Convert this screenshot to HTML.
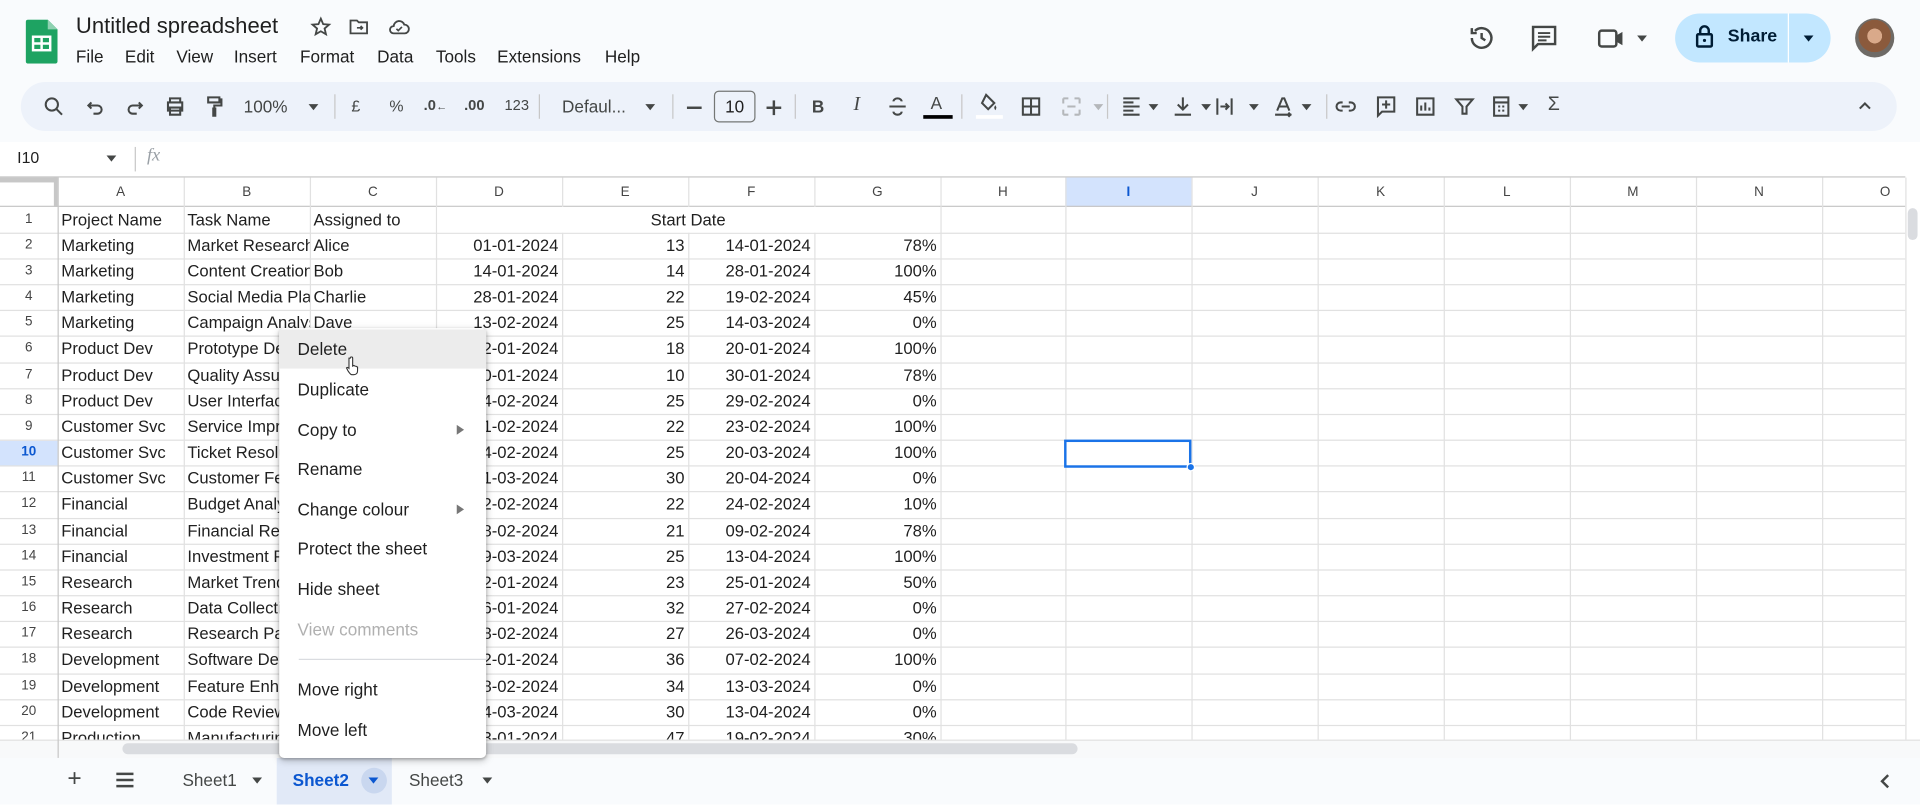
<!DOCTYPE html>
<html><head><meta charset="utf-8"><style>
*{box-sizing:border-box;margin:0;padding:0}
html,body{width:1920px;height:804px;overflow:hidden;background:#fff;font-family:"Liberation Sans",Arial,sans-serif;color:#1f1f1f}
#w{position:absolute;left:0;top:0;width:1568px;height:657px;transform:scale(1.22449);transform-origin:0 0;background:#fff}
.a{position:absolute}
.hdr{left:0;top:0;width:1568px;height:116px;background:#f9fbfd}
.tb{left:17px;top:67px;width:1532px;height:40px;border-radius:20px;background:#edf2fa}
.ic{position:absolute;top:77px;width:20px;height:20px}
.t{position:absolute;font-size:14px;color:#444746;top:79px}
.sep{position:absolute;top:77px;width:1px;height:20px;background:#c7c7c7}
.menu span{position:absolute;top:38px;font-size:14px;color:#1f1f1f}
.vl{position:absolute;top:145px;width:1px;height:460px;background:#e1e1e1}
.hl{position:absolute;left:0;width:1556px;height:1px;background:#e1e1e1}
.ch{position:absolute;top:145px;height:24px;font-size:11px;color:#444;text-align:center;line-height:24px}
.r{position:absolute;left:0;width:768px;height:21px;font-size:13.6px;line-height:21px}
.r div{position:absolute;top:0;height:21px;overflow:hidden;white-space:nowrap}
.n{left:0;width:47px;text-align:center;font-size:11px!important;color:#444}
.c1{left:50px;width:100px}.c2{left:153px;width:100px}.c3{left:256px;width:100px}
.c4{left:356px;width:100px;text-align:right}.c5{left:459px;width:100px;text-align:right}.c6{left:562px;width:100px;text-align:right}.c7{left:665px;width:100px;text-align:right}
.cm{position:absolute;left:228px;top:268px;width:169px;height:351px;background:#fff;border-radius:4px;box-shadow:0 2px 6px rgba(0,0,0,.25),0 1px 2px rgba(0,0,0,.2)}
.cm div{position:absolute;left:15px;font-size:14px;color:#1f1f1f}
.ar{position:absolute;left:145px;width:0;height:0;border-left:6px solid #777;border-top:4px solid transparent;border-bottom:4px solid transparent}
</style></head><body><div id="w">
<div class="a hdr"></div>
<svg class="a" style="left:21px;top:16px" width="26" height="36" viewBox="0 0 26 36"><path d="M2 0h16l8 8v26a2 2 0 0 1-2 2H2a2 2 0 0 1-2-2V2a2 2 0 0 1 2-2z" fill="#1ea362"/><path d="M18 0l8 8h-8z" fill="#8ed1b1"/><rect x="6" y="14" width="14" height="11" fill="none" stroke="#fff" stroke-width="2"/><path d="M6 19.5h14M13 14v11" stroke="#fff" stroke-width="2"/></svg>
<div class="a" style="left:62px;top:11px;font-size:18px;color:#1f1f1f">Untitled spreadsheet</div>
<svg class="a" style="left:253px;top:13px" width="18" height="18" viewBox="0 0 24 24"><path d="M12 3l2.6 6 6.4.5-4.9 4.2 1.5 6.3L12 16.7 6.4 20l1.5-6.3L3 9.5l6.4-.5z" fill="none" stroke="#444746" stroke-width="2"/></svg>
<svg class="a" style="left:284px;top:13px" width="18" height="18" viewBox="0 0 24 24"><path d="M3 5h7l2 2h9v12H3z" fill="none" stroke="#444746" stroke-width="2"/><path d="M10 13h6m-2-2l2 2-2 2" stroke="#444746" stroke-width="1.8" fill="none"/></svg>
<svg class="a" style="left:316px;top:13px" width="20" height="18" viewBox="0 0 24 24"><path d="M6 19a4 4 0 0 1 0-8 6 6 0 0 1 11.6-1.5A4.5 4.5 0 0 1 18 19z" fill="none" stroke="#444746" stroke-width="2"/><path d="M9 14l2 2 4-4" stroke="#444746" stroke-width="1.8" fill="none"/></svg>
<div class="a menu" style="left:0;top:0"><span style="left:62px">File</span><span style="left:102px">Edit</span><span style="left:144px">View</span><span style="left:191px">Insert</span><span style="left:245px">Format</span><span style="left:308px">Data</span><span style="left:356px">Tools</span><span style="left:406px">Extensions</span><span style="left:494px">Help</span></div>
<svg class="a" style="left:1198px;top:19px" width="24" height="24" viewBox="0 0 24 24"><path d="M4 12a8 8 0 1 0 2.5-5.8M4 4v4h4" fill="none" stroke="#444746" stroke-width="2"/><path d="M12 8v4l3 2" stroke="#444746" stroke-width="2" fill="none"/></svg>
<svg class="a" style="left:1249px;top:19px" width="24" height="24" viewBox="0 0 24 24"><path d="M3 3h18v14H7l-4 4z" fill="none" stroke="#444746" stroke-width="2"/><path d="M7 8h10M7 11h10M7 14h7" stroke="#444746" stroke-width="1.6"/></svg>
<svg class="a" style="left:1303px;top:19px" width="26" height="24" viewBox="0 0 26 24"><rect x="3" y="6" width="14" height="13" rx="2" fill="none" stroke="#444746" stroke-width="2"/><path d="M17 10l5-3v11l-5-3z" fill="#444746"/></svg>
<div class="a" style="left:1337px;top:29px;border-left:4px solid transparent;border-right:4px solid transparent;border-top:5px solid #444746"></div>
<div class="a" style="left:1368px;top:11px;width:127px;height:40px;border-radius:20px;background:#c2e7ff"></div>
<div class="a" style="left:1460px;top:11px;width:1px;height:40px;background:#fff"></div>
<svg class="a" style="left:1384px;top:20px" width="16" height="20" viewBox="0 0 16 20"><rect x="2" y="8" width="12" height="10" rx="1" fill="none" stroke="#001d35" stroke-width="2"/><path d="M4.5 8V5a3.5 3.5 0 0 1 7 0v3" fill="none" stroke="#001d35" stroke-width="2"/><circle cx="8" cy="13" r="1.3" fill="#001d35"/></svg>
<div class="a" style="left:1411px;top:22px;font-size:14.5px;color:#001d35;font-weight:bold">Share</div>
<div class="a" style="left:1473px;top:29px;border-left:4px solid transparent;border-right:4px solid transparent;border-top:5px solid #001d35"></div>
<div class="a" style="left:1515px;top:15px;width:32px;height:32px;border-radius:50%;background:radial-gradient(circle at 50% 45%,#d9a98a 0 25%,#8b5a3c 26% 55%,#6e6a66 56%)"></div>
<div class="a tb"></div>
<svg class="ic" style="left:34px" viewBox="0 0 24 24"><circle cx="10" cy="10" r="6" fill="none" stroke="#444746" stroke-width="2"/><path d="M14.5 14.5L20 20" stroke="#444746" stroke-width="2"/></svg>
<svg class="ic" style="left:68px" viewBox="0 0 24 24"><path d="M8 8l-3 3 3 3M5 11h9a4 4 0 0 1 0 8h-4" fill="none" stroke="#444746" stroke-width="2"/></svg>
<svg class="ic" style="left:100px" viewBox="0 0 24 24"><path d="M16 8l3 3-3 3M19 11h-9a4 4 0 0 0 0 8h4" fill="none" stroke="#444746" stroke-width="2"/></svg>
<svg class="ic" style="left:133px" viewBox="0 0 24 24"><path d="M7 8V4h10v4M5 8h14v8H5zM7 13h10v7H7z" fill="none" stroke="#444746" stroke-width="2"/></svg>
<svg class="ic" style="left:165px" viewBox="0 0 24 24"><path d="M6 3h11v5H6zM17 5h2v6h-7v3M11 14h2v7h-2z" fill="none" stroke="#444746" stroke-width="2"/></svg>
<div class="t" style="left:199px">100%</div>
<div class="a" style="left:252px;top:85px;border-left:4px solid transparent;border-right:4px solid transparent;border-top:5px solid #444746"></div>
<div class="sep" style="left:273px"></div>
<div class="t" style="left:287px;font-size:13px">£</div>
<div class="t" style="left:318px;font-size:13px">%</div>
<div class="t" style="left:346px;font-size:12px;font-weight:bold">.0<span style="font-size:9px">←</span></div>
<div class="t" style="left:379px;font-size:12px;font-weight:bold">.00</div>
<div class="t" style="left:412px;font-size:12px">123</div>
<div class="sep" style="left:440px"></div>
<div class="t" style="left:459px">Defaul...</div>
<div class="a" style="left:527px;top:85px;border-left:4px solid transparent;border-right:4px solid transparent;border-top:5px solid #444746"></div>
<div class="sep" style="left:549px"></div>
<div class="a" style="left:561px;top:87px;width:12px;height:2px;background:#444746"></div>
<div class="a" style="left:583px;top:74px;width:34px;height:26px;border:1px solid #747775;border-radius:4px;font-size:14px;text-align:center;line-height:24px">10</div>
<div class="a" style="left:626px;top:87px;width:12px;height:2px;background:#444746"></div>
<div class="a" style="left:631px;top:82px;width:2px;height:12px;background:#444746"></div>
<div class="sep" style="left:649px"></div>
<div class="t" style="left:663px;font-weight:bold;color:#444746">B</div>
<div class="t" style="left:697px;font-style:italic;font-family:'Liberation Serif',serif;font-size:16px;top:77px">I</div>
<svg class="ic" style="left:723px" viewBox="0 0 24 24"><path d="M4 12h16M16 7a4 3 0 0 0-8 0M8 17a4 3 0 0 0 8 0" fill="none" stroke="#444746" stroke-width="2"/></svg>
<div class="t" style="left:760px;top:76px">A</div>
<div class="a" style="left:754px;top:94px;width:24px;height:3px;background:#000"></div>
<div class="sep" style="left:785px"></div>
<svg class="ic" style="left:797px;top:75px" viewBox="0 0 24 24"><path d="M10 3l8 8-6 6-6-6z" fill="none" stroke="#444746" stroke-width="2"/><path d="M20 15c0 2-1 3-1 3s-1-1-1-3l1-2z" fill="#444746"/></svg>
<div class="a" style="left:797px;top:94px;width:22px;height:3px;background:#fff"></div>
<svg class="ic" style="left:832px" viewBox="0 0 24 24"><path d="M4 4h16v16H4zM12 4v16M4 12h16" fill="none" stroke="#444746" stroke-width="2"/></svg>
<svg class="ic" style="left:865px" viewBox="0 0 24 24"><path d="M4 4h5M4 20h5M15 4h5M15 20h5M4 4v5M4 15v5M20 4v5M20 15v5M8 12h8" fill="none" stroke="#b4b7ba" stroke-width="2"/></svg>
<div class="a" style="left:893px;top:85px;border-left:4px solid transparent;border-right:4px solid transparent;border-top:5px solid #b4b7ba"></div>
<div class="sep" style="left:904px"></div>
<svg class="ic" style="left:914px" viewBox="0 0 24 24"><path d="M4 4h16M4 8h10M4 12h16M4 16h10M4 20h16" stroke="#444746" stroke-width="2"/></svg>
<div class="a" style="left:938px;top:85px;border-left:4px solid transparent;border-right:4px solid transparent;border-top:5px solid #444746"></div>
<svg class="ic" style="left:956px" viewBox="0 0 24 24"><path d="M12 3v12M7 10l5 5 5-5M4 20h16" fill="none" stroke="#444746" stroke-width="2"/></svg>
<div class="a" style="left:981px;top:85px;border-left:4px solid transparent;border-right:4px solid transparent;border-top:5px solid #444746"></div>
<svg class="ic" style="left:990px" viewBox="0 0 24 24"><path d="M5 4v16M19 4v16M8 12h8M13 9l3 3-3 3" fill="none" stroke="#444746" stroke-width="2"/></svg>
<div class="a" style="left:1020px;top:85px;border-left:4px solid transparent;border-right:4px solid transparent;border-top:5px solid #444746"></div>
<svg class="ic" style="left:1038px" viewBox="0 0 24 24"><path d="M6 16L11 4h2l5 12M8 12h8M4 20h16M17 18l2 2-2 2" fill="none" stroke="#444746" stroke-width="2"/></svg>
<div class="a" style="left:1063px;top:85px;border-left:4px solid transparent;border-right:4px solid transparent;border-top:5px solid #444746"></div>
<div class="sep" style="left:1083px"></div>
<svg class="ic" style="left:1089px" viewBox="0 0 24 24"><path d="M9 8H7a4 4 0 0 0 0 8h2M15 8h2a4 4 0 0 1 0 8h-2M8 12h8" fill="none" stroke="#444746" stroke-width="2"/></svg>
<svg class="ic" style="left:1122px" viewBox="0 0 24 24"><path d="M4 3h16v14H8l-4 4zM12 6v8M8 10h8" fill="none" stroke="#444746" stroke-width="2"/></svg>
<svg class="ic" style="left:1154px" viewBox="0 0 24 24"><path d="M4 4h16v16H4zM8 16v-5M12 16V8M16 16v-3" fill="none" stroke="#444746" stroke-width="2"/></svg>
<svg class="ic" style="left:1186px" viewBox="0 0 24 24"><path d="M4 5h16l-6 7v7h-4v-7z" fill="none" stroke="#444746" stroke-width="2"/></svg>
<svg class="ic" style="left:1216px" viewBox="0 0 24 24"><path d="M5 3h14v18H5zM5 8h14M9 12h2M13 12h2M9 16h2M13 16h2" fill="none" stroke="#444746" stroke-width="2"/></svg>
<div class="a" style="left:1240px;top:85px;border-left:4px solid transparent;border-right:4px solid transparent;border-top:5px solid #444746"></div>
<div class="t" style="left:1264px;font-size:16px;top:77px">Σ</div>
<svg class="ic" style="left:1513px" viewBox="0 0 24 24"><path d="M7 14l5-5 5 5" fill="none" stroke="#444746" stroke-width="2"/></svg>
<div class="a" style="left:14px;top:121px;font-size:13px">I10</div>
<div class="a" style="left:87px;top:127px;border-left:4px solid transparent;border-right:4px solid transparent;border-top:5px solid #444746"></div>
<div class="a" style="left:110px;top:120px;width:1px;height:20px;background:#c7c7c7"></div>
<div class="a" style="left:120px;top:119px;font-size:15px;font-style:italic;color:#9aa0a6;font-family:'Liberation Serif',serif">fx</div>
<div class="a" style="left:0;top:144px;width:1556px;height:1px;background:#c7c7c7"></div>
<div class="a" style="left:0;top:145px;width:47px;height:4px;background:#c7c7c7"></div>
<div class="a" style="left:44px;top:145px;width:3px;height:24px;background:#c7c7c7"></div>
<div class="a" style="left:870px;top:145px;width:103px;height:24px;background:#d3e3fd"></div>
<div class="a" style="left:0;top:360px;width:47px;height:21px;background:#d3e3fd"></div>
<div class="a" style="left:0;top:168px;width:1556px;height:1px;background:#c7c7c7"></div>
<div class="hl" style="top:190px"></div><div class="hl" style="top:211px"></div><div class="hl" style="top:232px"></div><div class="hl" style="top:253px"></div><div class="hl" style="top:274px"></div><div class="hl" style="top:296px"></div><div class="hl" style="top:317px"></div><div class="hl" style="top:338px"></div><div class="hl" style="top:359px"></div><div class="hl" style="top:380px"></div><div class="hl" style="top:401px"></div><div class="hl" style="top:423px"></div><div class="hl" style="top:444px"></div><div class="hl" style="top:465px"></div><div class="hl" style="top:486px"></div><div class="hl" style="top:507px"></div><div class="hl" style="top:528px"></div><div class="hl" style="top:550px"></div><div class="hl" style="top:571px"></div><div class="hl" style="top:592px"></div>
<div class="vl" style="left:47px;background:#c7c7c7"></div>
<div class="vl" style="left:150px"></div><div class="vl" style="left:253px"></div><div class="vl" style="left:356px"></div><div class="vl" style="left:459px"></div><div class="vl" style="left:562px"></div><div class="vl" style="left:665px"></div><div class="vl" style="left:768px"></div><div class="vl" style="left:870px"></div><div class="vl" style="left:973px"></div><div class="vl" style="left:1076px"></div><div class="vl" style="left:1179px"></div><div class="vl" style="left:1282px"></div><div class="vl" style="left:1385px"></div><div class="vl" style="left:1488px"></div>
<div class="a" style="left:357px;top:169px;width:410px;height:21px;background:#fff"></div>
<div class="ch" style="left:47px;width:103px">A</div><div class="ch" style="left:150px;width:103px">B</div><div class="ch" style="left:253px;width:103px">C</div><div class="ch" style="left:356px;width:103px">D</div><div class="ch" style="left:459px;width:103px">E</div><div class="ch" style="left:562px;width:103px">F</div><div class="ch" style="left:665px;width:103px">G</div><div class="ch" style="left:768px;width:102px">H</div><div class="ch" style="left:870px;width:103px;color:#0b57d0;font-weight:bold">I</div><div class="ch" style="left:973px;width:103px">J</div><div class="ch" style="left:1076px;width:103px">K</div><div class="ch" style="left:1179px;width:103px">L</div><div class="ch" style="left:1282px;width:103px">M</div><div class="ch" style="left:1385px;width:103px">N</div><div class="ch" style="left:1488px;width:103px">O</div>
<div class="a" style="left:1556px;top:145px;width:12px;height:460px;background:#fff;border-left:1px solid #e1e1e1"></div>
<div class="a" style="left:1558px;top:170px;width:8px;height:26px;border-radius:4px;background:#dadce0"></div>

<div class="r" style="top:169px"><div class="n">1</div><div class="c1">Project Name</div><div class="c2">Task Name</div><div class="c3">Assigned to</div><div style="left:356px;width:412px;text-align:center">Start Date</div></div>
<div class="r" style="top:190px"><div class="n">2</div><div class="c1">Marketing</div><div class="c2">Market Research</div><div class="c3">Alice</div><div class="c4">01-01-2024</div><div class="c5">13</div><div class="c6">14-01-2024</div><div class="c7">78%</div></div>
<div class="r" style="top:211px"><div class="n">3</div><div class="c1">Marketing</div><div class="c2">Content Creation</div><div class="c3">Bob</div><div class="c4">14-01-2024</div><div class="c5">14</div><div class="c6">28-01-2024</div><div class="c7">100%</div></div>
<div class="r" style="top:232px"><div class="n">4</div><div class="c1">Marketing</div><div class="c2">Social Media Plan</div><div class="c3">Charlie</div><div class="c4">28-01-2024</div><div class="c5">22</div><div class="c6">19-02-2024</div><div class="c7">45%</div></div>
<div class="r" style="top:253px"><div class="n">5</div><div class="c1">Marketing</div><div class="c2">Campaign Analysis</div><div class="c3">Dave</div><div class="c4">13-02-2024</div><div class="c5">25</div><div class="c6">14-03-2024</div><div class="c7">0%</div></div>
<div class="r" style="top:274px"><div class="n">6</div><div class="c1">Product Dev</div><div class="c2">Prototype Design</div><div class="c3">Eve</div><div class="c4">02-01-2024</div><div class="c5">18</div><div class="c6">20-01-2024</div><div class="c7">100%</div></div>
<div class="r" style="top:296px"><div class="n">7</div><div class="c1">Product Dev</div><div class="c2">Quality Assurance</div><div class="c3">Frank</div><div class="c4">20-01-2024</div><div class="c5">10</div><div class="c6">30-01-2024</div><div class="c7">78%</div></div>
<div class="r" style="top:317px"><div class="n">8</div><div class="c1">Product Dev</div><div class="c2">User Interface</div><div class="c3">Grace</div><div class="c4">04-02-2024</div><div class="c5">25</div><div class="c6">29-02-2024</div><div class="c7">0%</div></div>
<div class="r" style="top:338px"><div class="n">9</div><div class="c1">Customer Svc</div><div class="c2">Service Improvement</div><div class="c3">Henry</div><div class="c4">01-02-2024</div><div class="c5">22</div><div class="c6">23-02-2024</div><div class="c7">100%</div></div>
<div class="r" style="top:359px"><div class="n" style="color:#0b57d0;font-weight:bold">10</div><div class="c1">Customer Svc</div><div class="c2">Ticket Resolution</div><div class="c3">Ivy</div><div class="c4">24-02-2024</div><div class="c5">25</div><div class="c6">20-03-2024</div><div class="c7">100%</div></div>
<div class="r" style="top:380px"><div class="n">11</div><div class="c1">Customer Svc</div><div class="c2">Customer Feedback</div><div class="c3">Jack</div><div class="c4">21-03-2024</div><div class="c5">30</div><div class="c6">20-04-2024</div><div class="c7">0%</div></div>
<div class="r" style="top:401px"><div class="n">12</div><div class="c1">Financial</div><div class="c2">Budget Analysis</div><div class="c3">Kate</div><div class="c4">02-02-2024</div><div class="c5">22</div><div class="c6">24-02-2024</div><div class="c7">10%</div></div>
<div class="r" style="top:423px"><div class="n">13</div><div class="c1">Financial</div><div class="c2">Financial Report</div><div class="c3">Leo</div><div class="c4">18-02-2024</div><div class="c5">21</div><div class="c6">09-02-2024</div><div class="c7">78%</div></div>
<div class="r" style="top:444px"><div class="n">14</div><div class="c1">Financial</div><div class="c2">Investment Plan</div><div class="c3">Mia</div><div class="c4">19-03-2024</div><div class="c5">25</div><div class="c6">13-04-2024</div><div class="c7">100%</div></div>
<div class="r" style="top:465px"><div class="n">15</div><div class="c1">Research</div><div class="c2">Market Trends</div><div class="c3">Nick</div><div class="c4">02-01-2024</div><div class="c5">23</div><div class="c6">25-01-2024</div><div class="c7">50%</div></div>
<div class="r" style="top:486px"><div class="n">16</div><div class="c1">Research</div><div class="c2">Data Collection</div><div class="c3">Olivia</div><div class="c4">26-01-2024</div><div class="c5">32</div><div class="c6">27-02-2024</div><div class="c7">0%</div></div>
<div class="r" style="top:507px"><div class="n">17</div><div class="c1">Research</div><div class="c2">Research Paper</div><div class="c3">Paul</div><div class="c4">28-02-2024</div><div class="c5">27</div><div class="c6">26-03-2024</div><div class="c7">0%</div></div>
<div class="r" style="top:528px"><div class="n">18</div><div class="c1">Development</div><div class="c2">Software Design</div><div class="c3">Quinn</div><div class="c4">02-01-2024</div><div class="c5">36</div><div class="c6">07-02-2024</div><div class="c7">100%</div></div>
<div class="r" style="top:550px"><div class="n">19</div><div class="c1">Development</div><div class="c2">Feature Enhancement</div><div class="c3">Rose</div><div class="c4">08-02-2024</div><div class="c5">34</div><div class="c6">13-03-2024</div><div class="c7">0%</div></div>
<div class="r" style="top:571px"><div class="n">20</div><div class="c1">Development</div><div class="c2">Code Review</div><div class="c3">Sam</div><div class="c4">14-03-2024</div><div class="c5">30</div><div class="c6">13-04-2024</div><div class="c7">0%</div></div>
<div class="r" style="top:592px"><div class="n">21</div><div class="c1">Production</div><div class="c2">Manufacturing</div><div class="c3">Tom</div><div class="c4">03-01-2024</div><div class="c5">47</div><div class="c6">19-02-2024</div><div class="c7">30%</div></div>

<div class="a" style="left:869px;top:359px;width:104px;height:23px;border:2px solid #1a73e8"></div>
<div class="a" style="left:969px;top:378px;width:7px;height:7px;border-radius:50%;background:#1a73e8;border:1px solid #fff"></div>
<div class="a" style="left:0;top:604px;width:1568px;height:15px;background:#f8f9fa;border-top:1px solid #e1e1e1"></div>
<div class="a" style="left:100px;top:607px;width:780px;height:9px;border-radius:5px;background:#dadce0"></div>
<div class="a" style="left:47px;top:604px;width:1px;height:15px;background:#c7c7c7"></div>
<div class="a" style="left:0;top:619px;width:1568px;height:38px;background:#f9fbfd"></div>
<div class="a" style="left:55px;top:625px;font-size:20px;color:#444746">+</div>
<svg class="a" style="left:94px;top:630px" width="16" height="14" viewBox="0 0 16 14"><path d="M1 2h14M1 7h14M1 12h14" stroke="#444746" stroke-width="2"/></svg>
<div class="a" style="left:149px;top:629px;font-size:14px;color:#444746">Sheet1</div>
<div class="a" style="left:206px;top:635px;border-left:4px solid transparent;border-right:4px solid transparent;border-top:5px solid #444746"></div>
<div class="a" style="left:226px;top:619px;width:94px;height:38px;background:#e1e9f7"></div>
<div class="a" style="left:239px;top:629px;font-size:14px;color:#0b57d0;font-weight:bold">Sheet2</div>
<div class="a" style="left:295px;top:627px;width:21px;height:21px;border-radius:50%;background:#c9d7ef"></div>
<div class="a" style="left:301px;top:635px;border-left:4px solid transparent;border-right:4px solid transparent;border-top:5px solid #0b57d0"></div>
<div class="a" style="left:334px;top:629px;font-size:14px;color:#444746">Sheet3</div>
<div class="a" style="left:394px;top:635px;border-left:4px solid transparent;border-right:4px solid transparent;border-top:5px solid #444746"></div>
<svg class="a" style="left:1533px;top:631px" width="14" height="14" viewBox="0 0 14 14"><path d="M9 2L4 7l5 5" stroke="#444746" stroke-width="2" fill="none"/></svg>
<div class="cm">
<div style="left:0;top:1px;width:169px;height:32px;background:#ececec"></div>
<div style="top:9px">Delete</div>
<div style="top:42px">Duplicate</div>
<div style="top:75px">Copy to</div><span class="ar" style="top:79px"></span>
<div style="top:107px">Rename</div>
<div style="top:140px">Change colour</div><span class="ar" style="top:144px"></span>
<div style="top:172px">Protect the sheet</div>
<div style="top:205px">Hide sheet</div>
<div style="top:238px;color:#b0b0b0">View comments</div>
<div style="left:16px;top:270px;width:153px;height:1px;background:#dadce0"></div>
<div style="top:287px">Move right</div>
<div style="top:320px">Move left</div>
</div>
<svg class="a" style="left:282px;top:291px" width="12" height="16" viewBox="0 0 12 16"><path d="M4 1.5a1 1 0 0 1 2 0V8l1-.5 1 .5 1 .2 1 .6V12c0 2-1.5 3-3 3H5.5C4 15 3 13 2 11.5L1 9.5c.5-.6 1.2-.5 2 .3V1.5z" fill="#fff" stroke="#333" stroke-width=".9"/></svg>
</div></body></html>
